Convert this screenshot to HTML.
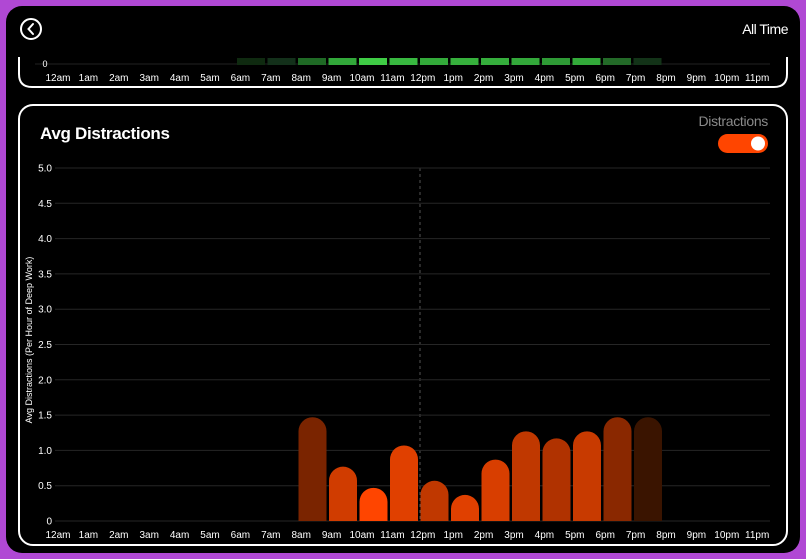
<!DOCTYPE html><html><head><style>
body{margin:0;width:806px;height:559px;background:#b048d4;overflow:hidden;font-family:"Liberation Sans",sans-serif}
</style></head><body>
<svg width="806" height="559" style="position:absolute;left:0;top:0" font-family="Liberation Sans, sans-serif">
<rect x="6" y="6" width="794" height="547" rx="16" fill="#000"/>
<circle cx="31" cy="29" r="10" fill="none" stroke="#fff" stroke-width="2"/>
<path d="M33 24 L28.5 29 L33 34" fill="none" stroke="#fff" stroke-width="2" stroke-linecap="round"/>
<text x="788" y="34" fill="#fff" font-size="14" text-anchor="end" letter-spacing="-0.5">All Time</text>
<path d="M19 57 V74 Q19 87 32 87 H774 Q787 87 787 74 V57" fill="none" stroke="#fff" stroke-width="2"/>
<line x1="35" y1="64" x2="770" y2="64" stroke="#222" stroke-width="1"/>
<text x="45" y="67" fill="#fff" font-size="9" text-anchor="middle">0</text>
<g id="g"></g>
<rect x="19" y="105" width="768" height="440" rx="14" fill="none" stroke="#fff" stroke-width="2"/>
<text x="40" y="139" fill="#fff" font-size="17" font-weight="bold" letter-spacing="-0.3">Avg Distractions</text>
<text x="768" y="126" fill="#8a8a8a" font-size="14" text-anchor="end" letter-spacing="-0.3">Distractions</text>
<rect x="718" y="134" width="50" height="19" rx="9.5" fill="#ff4500"/>
<circle cx="758" cy="143.5" r="7" fill="#fff"/>
<text transform="translate(32,340) rotate(-90)" fill="#fff" font-size="9" text-anchor="middle">Avg Distractions (Per Hour of Deep Work)</text>
<line x1="420" y1="168" x2="420" y2="521" stroke="#555" stroke-dasharray="3,3"/>
<g id="c"></g>
</svg>
<script>
var ns="http://www.w3.org/2000/svg",g=document.getElementById('g'),c=document.getElementById('c');
function el(p,t,a,txt){var e=document.createElementNS(ns,t);for(var k in a)e.setAttribute(k,a[k]);if(txt!=null)e.textContent=txt;p.appendChild(e);return e;}
var labs=["12am","1am","2am","3am","4am","5am","6am","7am","8am","9am","10am","11am","12pm","1pm","2pm","3pm","4pm","5pm","6pm","7pm","8pm","9pm","10pm","11pm"];
var gc={6:"#0f2a10",7:"#13301a",8:"#1f6a25",9:"#32a83a",10:"#3fcc45",11:"#38b840",12:"#33aa3a",13:"#36b03c",14:"#35ae3c",15:"#33a83a",16:"#2e9a35",17:"#33aa3a",18:"#236a28",19:"#133318"};
var lf='"Liberation Sans Narrow","Liberation Sans",sans-serif';
for(var i=0;i<24;i++){var x=237+30.5*(i-6);
 if(gc[i])el(g,'rect',{x:x,y:58,width:28,height:7,fill:gc[i]});
 el(g,'text',{x:58+30.4*i,y:81,fill:'#fff','font-size':10,'font-family':lf,'text-anchor':'middle'},labs[i]);
 el(c,'text',{x:58+30.4*i,y:538,fill:'#fff','font-size':10,'font-family':lf,'text-anchor':'middle'},labs[i]);}
for(var j=0;j<=10;j++){var y=521-35.3*j;
 el(c,'line',{x1:55,y1:y,x2:770,y2:y,stroke:'#262626'});
 el(c,'text',{x:52,y:y+3.5,fill:'#fff','font-size':10,'font-family':lf,'text-anchor':'end'},j==0?'0':(j/2).toFixed(1));}
var bv={8:[1.47,"#7a2400"],9:[0.77,"#d03c00"],10:[0.47,"#ff4500"],11:[1.07,"#e04000"],12:[0.57,"#c03800"],13:[0.37,"#e04000"],14:[0.87,"#d83e00"],15:[1.27,"#c03800"],16:[1.17,"#b03200"],17:[1.27,"#c83a00"],18:[1.47,"#8a2800"],19:[1.47,"#3a1400"]};
for(var k in bv){var x=237+30.5*(k-6)+0.5,h=bv[k][0]*70.6,t=521-h,w=28,r=14;
 el(c,'path',{d:'M'+x+' 521 V'+(t+r)+' A'+r+' '+r+' 0 0 1 '+(x+w)+' '+(t+r)+' V521 Z',fill:bv[k][1]});}
</script>
</body></html>
